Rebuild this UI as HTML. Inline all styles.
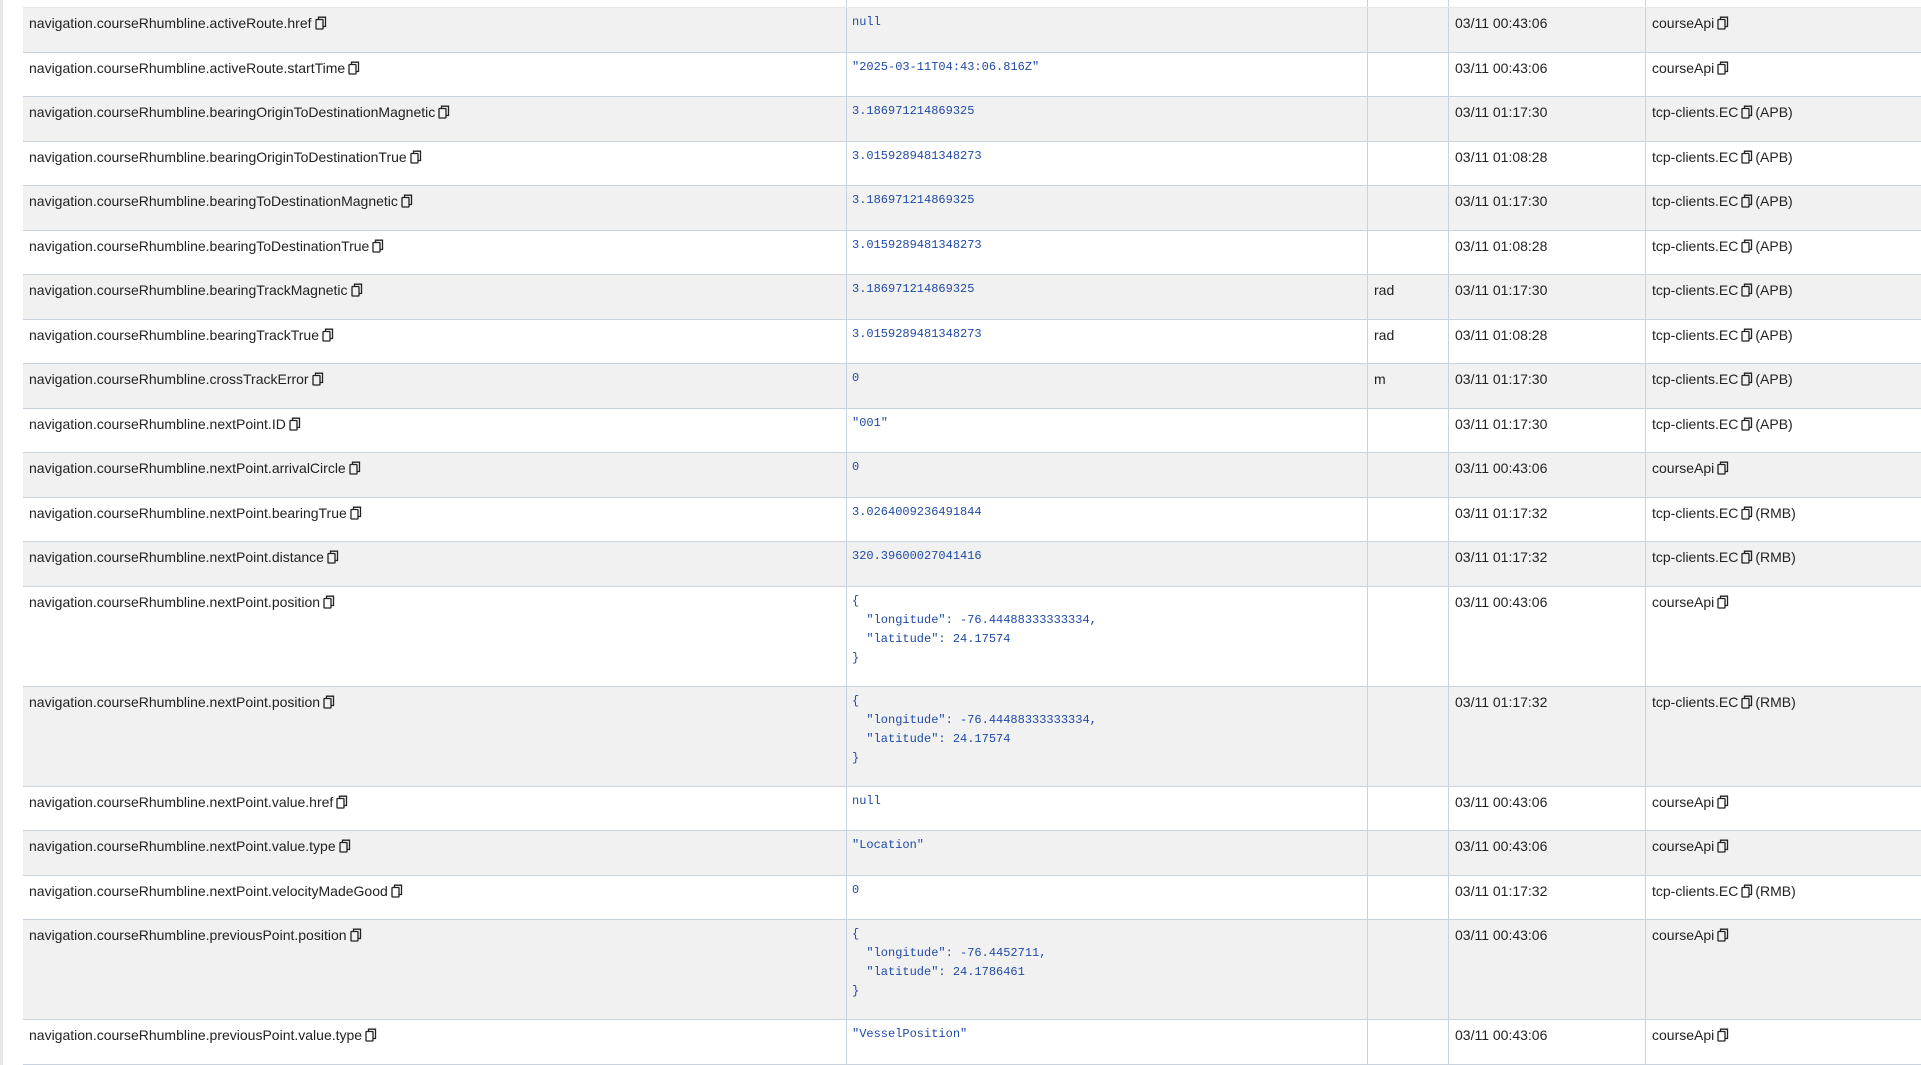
<!DOCTYPE html>
<html><head><meta charset="utf-8"><style>
*{margin:0;padding:0;box-sizing:border-box}
body{width:1921px;height:1065px;overflow:hidden;background:#fff;font-family:"Liberation Sans",Arial,sans-serif;font-size:14px;color:#222;position:relative}
.strip{position:absolute;left:0;top:0;width:3px;height:1065px;background:#e6e8ea}
.row{position:absolute;left:23px;width:1898px;border-bottom:1px solid #c9d3dd}
.row.g{background:#f1f1f1}
.c{position:absolute;top:0;bottom:0;padding:7px 0 0 6px;white-space:nowrap;line-height:16px}
.c1{left:0;width:823px}
.c2{left:823px;width:521px;border-left:1px solid #c9d3dd;padding-top:5px;padding-left:5px}
.c3{left:1344px;width:81px;border-left:1px solid #c9d3dd}
.c4{left:1425px;width:197px;border-left:1px solid #c9d3dd}
.c5{left:1622px;width:276px;border-left:1px solid #c9d3dd}
pre{font-family:"Liberation Mono",monospace;font-size:12px;color:#1f4aa6;line-height:19px;margin:0}
svg{vertical-align:-2px;margin:0 2px 0 3px}
</style></head><body>
<div class="strip"></div>
<div class="row" style="top:0;height:8px;border-bottom:1px solid #e3e6ea"><div class="c c2" style="padding:0"></div><div class="c c3" style="padding:0"></div><div class="c c4" style="padding:0"></div><div class="c c5" style="padding:0"></div></div>
<div id="t"></div>
<script>
var ic='<svg width="12" height="14" viewBox="0 0 12 14"><rect x="1" y="3.5" width="7" height="9.5" rx="0.5" fill="none" stroke="#222" stroke-width="1.3"/><path d="M3.5 3.5V1.2h7v9.3H8" fill="none" stroke="#222" stroke-width="1.3"/></svg>';
var R=[
["activeRoute.href","null","","03/11 00:43:06","c"],
["activeRoute.startTime","\"2025-03-11T04:43:06.816Z\"","","03/11 00:43:06","c"],
["bearingOriginToDestinationMagnetic","3.186971214869325","","03/11 01:17:30","A"],
["bearingOriginToDestinationTrue","3.0159289481348273","","03/11 01:08:28","A"],
["bearingToDestinationMagnetic","3.186971214869325","","03/11 01:17:30","A"],
["bearingToDestinationTrue","3.0159289481348273","","03/11 01:08:28","A"],
["bearingTrackMagnetic","3.186971214869325","rad","03/11 01:17:30","A"],
["bearingTrackTrue","3.0159289481348273","rad","03/11 01:08:28","A"],
["crossTrackError","0","m","03/11 01:17:30","A"],
["nextPoint.ID","\"001\"","","03/11 01:17:30","A"],
["nextPoint.arrivalCircle","0","","03/11 00:43:06","c"],
["nextPoint.bearingTrue","3.0264009236491844","","03/11 01:17:32","R"],
["nextPoint.distance","320.39600027041416","","03/11 01:17:32","R"],
["nextPoint.position","{\n  \"longitude\": -76.44488333333334,\n  \"latitude\": 24.17574\n}","","03/11 00:43:06","c",1],
["nextPoint.position","{\n  \"longitude\": -76.44488333333334,\n  \"latitude\": 24.17574\n}","","03/11 01:17:32","R",1],
["nextPoint.value.href","null","","03/11 00:43:06","c"],
["nextPoint.value.type","\"Location\"","","03/11 00:43:06","c"],
["nextPoint.velocityMadeGood","0","","03/11 01:17:32","R"],
["previousPoint.position","{\n  \"longitude\": -76.4452711,\n  \"latitude\": 24.1786461\n}","","03/11 00:43:06","c",1],
["previousPoint.value.type","\"VesselPosition\"","","03/11 00:43:06","c"]
];
var y=8,h='';
R.forEach(function(r,i){
 var H=r[5]?100:44.5;
 var src=r[4]=='c'?'courseApi'+ic:('tcp-clients.EC'+ic+(r[4]=='A'?'(APB)':'(RMB)'));
 h+='<div class="row'+(i%2==0?' g':'')+'" style="top:'+y+'px;height:'+H+'px"><div class="c c1">navigation.courseRhumbline.'+r[0]+ic+'</div><div class="c c2"><pre>'+r[1].replace(/</g,'&lt;')+'</pre></div><div class="c c3">'+r[2]+'</div><div class="c c4">'+r[3]+'</div><div class="c c5">'+src+'</div></div>';
 y+=H;
});
document.getElementById('t').innerHTML=h;
</script>
</body></html>
